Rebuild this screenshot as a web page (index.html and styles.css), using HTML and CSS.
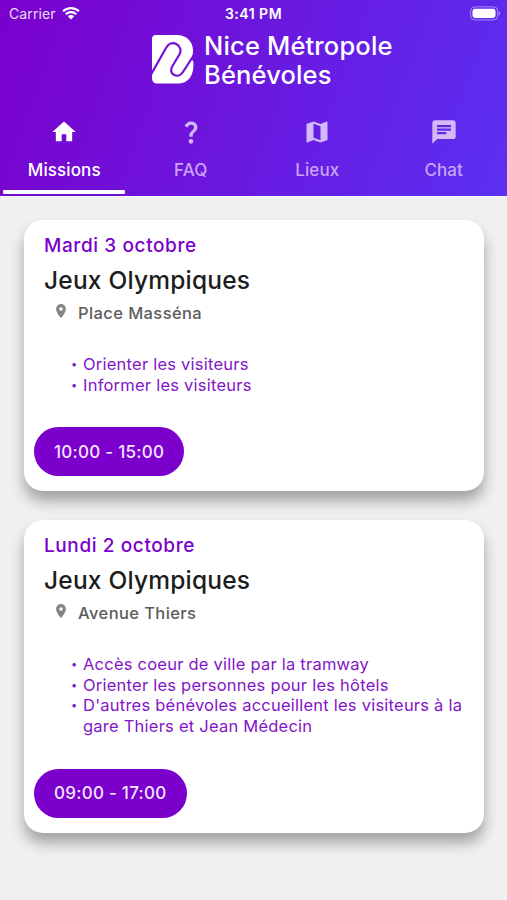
FILE: index.html
```html
<!DOCTYPE html>
<html lang="fr">
  <head>
    <meta charset="UTF-8" />
    <meta name="viewport" content="width=device-width, initial-scale=1" />
    <title>Nice Métropole Bénévoles</title>
    <link rel="stylesheet" href="styles.css">
  </head>

  <body>
    <header>
      <div class="status">
        <div class="carrier">
          <span>Carrier</span>
          <svg class="wifi" viewBox="0 0 18 14">
            <path d="M1 5.3a11.6 11.6 0 0 1 16 0" />
            <path d="M3.8 8.2a7.5 7.5 0 0 1 10.4 0" />
            <path class="dot" d="M5.8 10.2a4.6 4.6 0 0 1 6.4 0L9 13.6z" />
          </svg>
        </div>
        <span class="clock">3:41 PM</span>
        <svg class="battery" viewBox="0 0 31 15">
          <rect class="case" x="0.7" y="0.9" width="27" height="13" rx="4" />
          <rect x="2.5" y="2.8" width="23" height="9.2" rx="2.4" />
          <path class="tip" d="M28.6 5.2c2 .7 2 3.7 0 4.4z" />
        </svg>
      </div>

      <div class="logo">
        <svg viewBox="0 0 42 49">
          <path class="shape" d="M4 0H25C34.500 0 41 6.500 41 15.500C41 18.500 40.600 21 39.500 24L41.300 26.500C42.500 39 37 48.500 27 48.500H5.500C2 48.500 0 46.500 0 43V4Q0 0 4 0Z" />
          <path class="line" d="M-1 39.500L14.300 12.500C16.500 8.500 20.500 7.200 24.300 9C28.500 11.200 29.500 15.500 27.400 19.500L20.300 31.200C18.300 34.700 19 38.200 21.800 39.800C24.900 41.500 28.500 40.700 30.600 37.500L43 18.500" />
        </svg>
        <div class="name">Nice Métropole<br>Bénévoles</div>
      </div>

      <nav>
        <a class="tab valgt">
          <svg viewBox="0 0 24 24"><path d="M10 20v-6h4v6h5v-8h3L12 3 2 12h3v8z" /></svg>
          <span>Missions</span>
        </a>
        <a class="tab">
          <svg viewBox="0 0 24 24"><path d="M11.070 12.850c.77-1.390 2.250-2.210 3.110-3.440.91-1.290.4-3.700-2.180-3.700-1.690 0-2.520 1.280-2.870 2.340L6.540 6.960C7.250 4.830 9.180 3 11.990 3c2.350 0 3.960 1.070 4.780 2.410.7 1.150 1.110 3.300.03 4.900-1.200 1.770-2.350 2.310-2.970 3.450-.25.46-.35.76-.35 2.240h-2.890c-.01-.78-.13-2.050.48-3.150zM14 20c0 1.100-.9 2-2 2s-2-.9-2-2 .9-2 2-2 2 .9 2 2z" /></svg>
          <span>FAQ</span>
        </a>
        <a class="tab">
          <svg viewBox="0 0 24 24"><path d="M20.500 3l-.16.030L15 5.100 9 3 3.360 4.900c-.21.070-.36.250-.36.480V20.500c0 .28.22.5.5.5l.16-.030L9 18.900l6 2.100 5.640-1.900c.21-.070.36-.25.36-.48V3.500c0-.28-.22-.5-.5-.5zM15 19l-6-2.110V5l6 2.110V19z" /></svg>
          <span>Lieux</span>
        </a>
        <a class="tab">
          <svg viewBox="0 0 24 24"><path d="M20 2H4c-1.100 0-1.990.9-1.990 2L2 22l4-4h14c1.100 0 2-.9 2-2V4c0-1.100-.9-2-2-2zM6 9h12v2H6V9zm8 5H6v-2h8v2zm4-6H6V6h12v2z" /></svg>
          <span>Chat</span>
        </a>
      </nav>
    </header>

    <main>
      <article>
        <h3>Mardi 3 octobre</h3>
        <h2>Jeux Olympiques</h2>
        <p class="place">
          <svg viewBox="0 0 14 20"><path d="M7 0C3.130 0 0 3.130 0 7c0 5.250 7 13 7 13s7-7.750 7-13c0-3.870-3.130-7-7-7zm0 9.500a2.500 2.500 0 0 1 0-5 2.500 2.500 0 0 1 0 5z" /></svg>
          <span>Place Masséna</span>
        </p>
        <ul>
          <li>Orienter les visiteurs</li>
          <li>Informer les visiteurs</li>
        </ul>
        <button>10:00 - 15:00</button>
      </article>

      <article>
        <h3>Lundi 2 octobre</h3>
        <h2>Jeux Olympiques</h2>
        <p class="place">
          <svg viewBox="0 0 14 20"><path d="M7 0C3.130 0 0 3.130 0 7c0 5.250 7 13 7 13s7-7.750 7-13c0-3.870-3.130-7-7-7zm0 9.500a2.500 2.500 0 0 1 0-5 2.500 2.500 0 0 1 0 5z" /></svg>
          <span>Avenue Thiers</span>
        </p>
        <ul>
          <li>Accès coeur de ville par la tramway</li>
          <li>Orienter les personnes pour les hôtels</li>
          <li>D'autres bénévoles accueillent les visiteurs à la gare Thiers et Jean Médecin</li>
        </ul>
        <button>09:00 - 17:00</button>
      </article>
    </main>
  </body>
</html>
```

FILE: styles.css
```css
* {
  box-sizing: border-box;
}

body {
  margin: 0;
  min-height: 900px;
  background-color: #f0f0f0;
  font-family: Inter, "Liberation Sans", sans-serif;
}

header {
  height: 196px;
  color: white;
  background: linear-gradient(110deg, #7b00cc, #5a30f2);
  box-shadow: 0 1px 0 #fafafa;
}

.status {
  display: grid;
  grid-template-columns: 1fr auto 1fr;
  align-items: center;
  height: 27px;
  padding: 0 6px 0 9px;
  font-size: 14px;
}

.carrier {
  display: flex;
  align-items: center;
  gap: 6px;
  letter-spacing: 0.1px;
}

.carrier span {
  opacity: 0.85;
}

.wifi {
  width: 18px;
  height: 14px;
  margin-bottom: 2px;
  fill: none;
  stroke: white;
  stroke-width: 2.2;
}

.wifi .dot {
  fill: white;
  stroke: none;
}

.clock {
  margin-right: 3px;
  font-size: 14px;
  font-weight: 600;
  letter-spacing: 0.5px;
}

.battery {
  justify-self: end;
  width: 31px;
  height: 15px;
  fill: white;
}

.battery .case {
  fill: none;
  stroke: white;
  opacity: 0.45;
}

.battery .tip {
  opacity: 0.5;
}

.logo {
  display: flex;
  gap: 10px;
  padding: 8px 0 0 152px;
}

.logo svg {
  width: 42px;
  height: 49px;
}

.logo .shape {
  fill: white;
}

.logo .line {
  fill: none;
  stroke: #7210d8;
  stroke-width: 2.2;
}

.name {
  margin-top: -4px;
  font-size: 25.500px;
  font-weight: 500;
  line-height: 29px;
  letter-spacing: 0.15px;
  white-space: nowrap;
}

nav {
  display: grid;
  grid-template-columns: repeat(4, 1fr);
  height: 110px;
  padding-left: 1px;
}

.tab {
  display: flex;
  flex-direction: column;
  align-items: center;
  padding-top: 29px;
  font-size: 17px;
  font-weight: 500;
  line-height: 22px;
  letter-spacing: 0.1px;
  color: #c9a4f5;
}

.tab svg {
  width: 28px;
  height: 28px;
  margin-bottom: 13px;
  fill: #d3b8fa;
}

.valgt {
  color: white;
}

.valgt svg {
  fill: white;
}

.valgt::after {
  content: "";
  width: 122px;
  height: 4px;
  margin-top: 9px;
  border-radius: 1px;
  background-color: white;
}

main {
  display: grid;
  gap: 29px;
  padding: 24px 23px 0 24px;
}

article {
  padding: 12.600px 10px 15px;
  border-radius: 19px;
  background-color: white;
  box-shadow: 0 10px 14px rgba(0, 0, 0, 0.32);
}

h2,
h3 {
  margin: 0 10px;
}

h3 {
  font-size: 19px;
  font-weight: 500;
  line-height: 26px;
  letter-spacing: 0.6px;
  color: #7b00cc;
}

h2 {
  margin-top: 4px;
  font-size: 24.500px;
  font-weight: 500;
  line-height: 34px;
  letter-spacing: 0.2px;
  color: #1c1c1c;
}

.place {
  display: flex;
  align-items: center;
  gap: 12px;
  margin: 4px 0 0 22px;
  font-size: 16.500px;
  font-weight: 500;
  line-height: 24px;
  letter-spacing: 0.4px;
  color: #5c5c5c;
}

.place svg {
  width: 10px;
  height: 14px;
  margin-bottom: 3px;
  fill: #858585;
}

ul {
  margin: 29.200px 0 31.700px;
  padding: 0 8px 0 49px;
  list-style: none;
  font-size: 16.500px;
  line-height: 20.800px;
  letter-spacing: 0.23px;
  color: #8215c6;
}

li::before {
  content: "•";
  float: left;
  width: 12px;
  margin-left: -12px;
  font-size: 11px;
}

button {
  display: block;
  height: 49px;
  padding: 0 20px;
  border: none;
  border-radius: 25px;
  font-family: inherit;
  font-size: 17px;
  font-weight: 500;
  letter-spacing: 0.27px;
  color: #f3e4ff;
  background-color: #7b00cc;
}
```
